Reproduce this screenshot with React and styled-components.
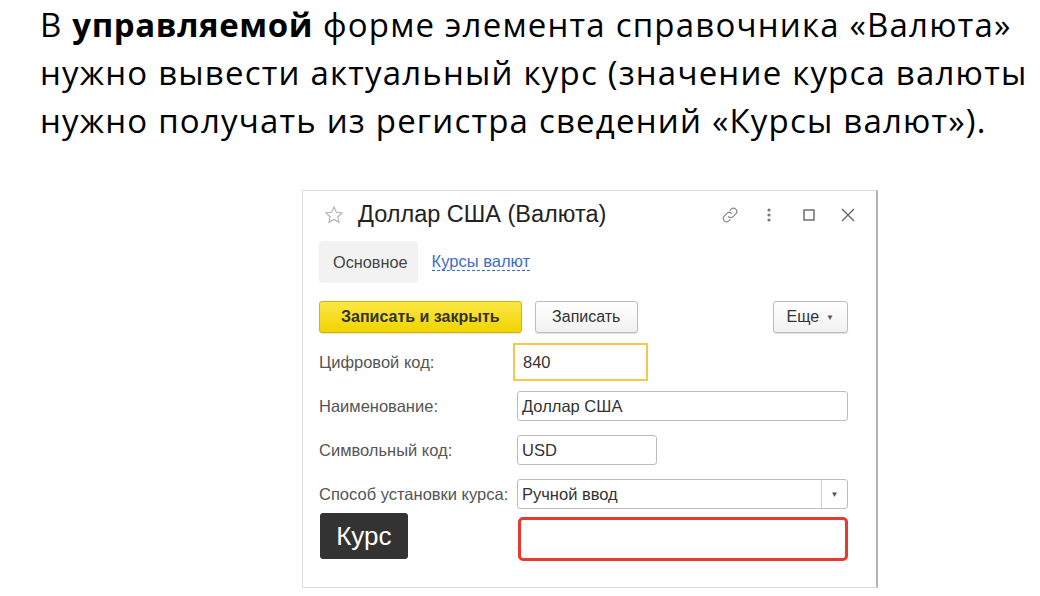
import React from "react";
import styled, { createGlobalStyle } from "styled-components";

const GlobalStyle = createGlobalStyle`
  html, body {
    margin: 0;
    padding: 0;
    background: #ffffff;
  }
  body {
    font-family: "Liberation Sans", Arial, sans-serif;
  }
`;

const Page = styled.div`
  width: 1040px;
  height: 596px;
  overflow: hidden;
  background: #fff;
`;

const Heading = styled.div`
  padding: 1px 0 0 40px;
  font-family: "Open Sans", "Noto Sans", sans-serif;
  font-size: 33px;
  letter-spacing: 1.2px;
  line-height: 48px;
  color: #000;
  white-space: nowrap;

  b {
    font-weight: 700;
    letter-spacing: 0.6px;
  }
`;

const Window = styled.div`
  margin: 45px 0 0 302px;
  width: 576px;
  height: 398px;
  box-sizing: border-box;
  border: 1px solid #dcdcdc;
  border-right: 2px solid #b4b4b4;
  background: #fff;
  display: flex;
  flex-direction: column;
  padding: 0 28px 0 16px;
  font-family: "Liberation Sans", Arial, sans-serif;
  color: #333;
`;

const Header = styled.div`
  height: 47px;
  display: flex;
  align-items: center;
  padding-left: 5px;
`;

const Title = styled.div`
  margin-left: 14px;
  font-size: 23.5px;
  color: #222;
  flex: 1;
`;

const HeaderIcons = styled.div`
  display: flex;
  align-items: center;
  margin-right: -20px;
`;

const IconCell = styled.div`
  width: 39.5px;
  display: flex;
  justify-content: center;
  align-items: center;
`;

const Tabs = styled.div`
  margin-top: 3px;
  display: flex;
  align-items: center;
  gap: 14px;
`;

const Tab = styled.div`
  height: 42px;
  padding: 0 10px 0 14px;
  display: flex;
  align-items: center;
  font-size: 16.3px;
  color: #444;
  background: ${(p) => (p.$active ? "#f2f2f2" : "transparent")};
  border-radius: 4px;
`;

const TabLink = styled.span`
  font-size: 16.5px;
  color: #3a6ec7;
  border-bottom: 1px dashed #3a6ec7;
  line-height: 17px;
`;

const Toolbar = styled.div`
  margin-top: 18px;
  height: 32px;
  display: flex;
  align-items: center;
  gap: 13px;
`;

const Button = styled.div`
  height: 32px;
  box-sizing: border-box;
  padding: 0 ${(p) => p.$px || 16}px;
  display: flex;
  align-items: center;
  justify-content: center;
  font-size: 16px;
  font-weight: ${(p) => (p.$primary ? 700 : 400)};
  color: #333;
  border-radius: 3px;
  border: 1px solid ${(p) => (p.$primary ? "#d4b400" : "#bcbcbc")};
  background: ${(p) =>
    p.$primary
      ? "linear-gradient(#fbe745, #f1d300)"
      : "linear-gradient(#ffffff, #f1f1f1)"};
  box-shadow: 0 1px 1px rgba(0, 0, 0, 0.12);
  margin-left: ${(p) => (p.$right ? "auto" : "0")};
`;

const Caret = styled.span`
  margin-left: 7px;
  font-size: 8px;
  color: #555;
`;

const Fields = styled.div`
  margin-top: 14px;
  display: flex;
  flex-direction: column;
  gap: 14px;
`;

const Row = styled.div`
  display: flex;
  align-items: center;
  height: ${(p) => p.$h || 30}px;
  margin-top: ${(p) => p.$mt || 0}px;
`;

const Label = styled.div`
  width: 198px;
  flex: none;
  font-size: 16.5px;
  color: #555;
  white-space: nowrap;
`;

const Input = styled.div`
  box-sizing: border-box;
  width: ${(p) => p.$w}px;
  height: ${(p) => p.$h || 30}px;
  padding-left: 4px;
  display: flex;
  align-items: center;
  font-size: 16.5px;
  color: #333;
  background: #fff;
  border: 1px solid #bdbdbd;
  border-radius: 3px;
`;

const FocusInput = styled(Input)`
  margin-left: -4px;
  height: 38px;
  padding-left: 8px;
  border: 2px solid #f5c84a;
  border-radius: 0;
`;

const SelectBox = styled(Input)`
  padding-right: 0;
`;

const SelectText = styled.span`
  flex: 1;
`;

const SelectBtn = styled.div`
  width: 25px;
  height: 100%;
  border-left: 1px solid #d0d0d0;
  display: flex;
  align-items: center;
  justify-content: center;
  font-size: 8px;
  color: #555;
`;

const DarkButton = styled.div`
  width: 88px;
  height: 46px;
  margin-left: 1px;
  box-sizing: border-box;
  border-radius: 3px;
  background: #333333;
  color: #fff;
  font-size: 26px;
  display: flex;
  align-items: center;
  justify-content: center;
`;

const RedInput = styled.div`
  margin-left: 110px;
  margin-top: 5px;
  width: 331px;
  height: 44px;
  box-sizing: border-box;
  border: 3px solid #e8392f;
  border-radius: 5px;
`;

const StarIcon = () => (
  <svg width="20" height="20" viewBox="0 0 24 24" fill="none" stroke="#b0b0b0" strokeWidth="1.3">
    <path d="M12 2.5l2.9 6.3 6.8.7-5.1 4.6 1.5 6.7L12 17.3l-6.1 3.5 1.5-6.7-5.1-4.6 6.8-.7z" />
  </svg>
);

const LinkIcon = () => (
  <svg width="20" height="20" viewBox="0 0 24 24" fill="none" stroke="#8a8a8a" strokeWidth="1.4" strokeLinecap="round">
    <path d="M10 14a4 4 0 0 0 5.7 0l3.3-3.3a4 4 0 0 0-5.7-5.7l-1.4 1.4" />
    <path d="M14 10a4 4 0 0 0-5.7 0L5 13.3a4 4 0 0 0 5.7 5.7l1.4-1.4" />
  </svg>
);

const DotsIcon = () => (
  <svg width="10" height="18" viewBox="0 0 10 18" fill="#777">
    <circle cx="5" cy="4" r="1.6" />
    <circle cx="5" cy="9" r="1.6" />
    <circle cx="5" cy="14" r="1.6" />
  </svg>
);

const SquareIcon = () => (
  <svg width="16" height="16" viewBox="0 0 16 16" fill="none" stroke="#666" strokeWidth="1.4">
    <rect x="3" y="3" width="10" height="10" />
  </svg>
);

const CloseIcon = () => (
  <svg width="18" height="18" viewBox="0 0 18 18" fill="none" stroke="#666" strokeWidth="1.4">
    <path d="M3 3l12 12M15 3L3 15" />
  </svg>
);

export default function App() {
  return (
    <Page>
      <GlobalStyle />
      <Heading>
        В <b>управляемой</b> форме элемента справочника «Валюта»
        <br />
        нужно вывести актуальный курс (значение курса валюты
        <br />
        нужно получать из регистра сведений «Курсы валют»).
      </Heading>
      <Window>
        <Header>
          <StarIcon />
          <Title>Доллар США (Валюта)</Title>
          <HeaderIcons>
            <IconCell><LinkIcon /></IconCell>
            <IconCell><DotsIcon /></IconCell>
            <IconCell><SquareIcon /></IconCell>
            <IconCell><CloseIcon /></IconCell>
          </HeaderIcons>
        </Header>
        <Tabs>
          <Tab $active>Основное</Tab>
          <TabLink>Курсы валют</TabLink>
        </Tabs>
        <Toolbar>
          <Button $primary $px={21}>Записать и закрыть</Button>
          <Button $px={16.5}>Записать</Button>
          <Button $right $px={13}>
            Еще<Caret>▼</Caret>
          </Button>
        </Toolbar>
        <Fields>
          <Row>
            <Label>Цифровой код:</Label>
            <FocusInput $w={135}>840</FocusInput>
          </Row>
          <Row>
            <Label>Наименование:</Label>
            <Input $w={331}>Доллар США</Input>
          </Row>
          <Row>
            <Label>Символьный код:</Label>
            <Input $w={140}>USD</Input>
          </Row>
          <Row>
            <Label>Способ установки курса:</Label>
            <SelectBox $w={331}>
              <SelectText>Ручной ввод</SelectText>
              <SelectBtn>▼</SelectBtn>
            </SelectBox>
          </Row>
          <Row $h={46} $mt={-10}>
            <DarkButton>Курс</DarkButton>
            <RedInput />
          </Row>
        </Fields>
      </Window>
    </Page>
  );
}
